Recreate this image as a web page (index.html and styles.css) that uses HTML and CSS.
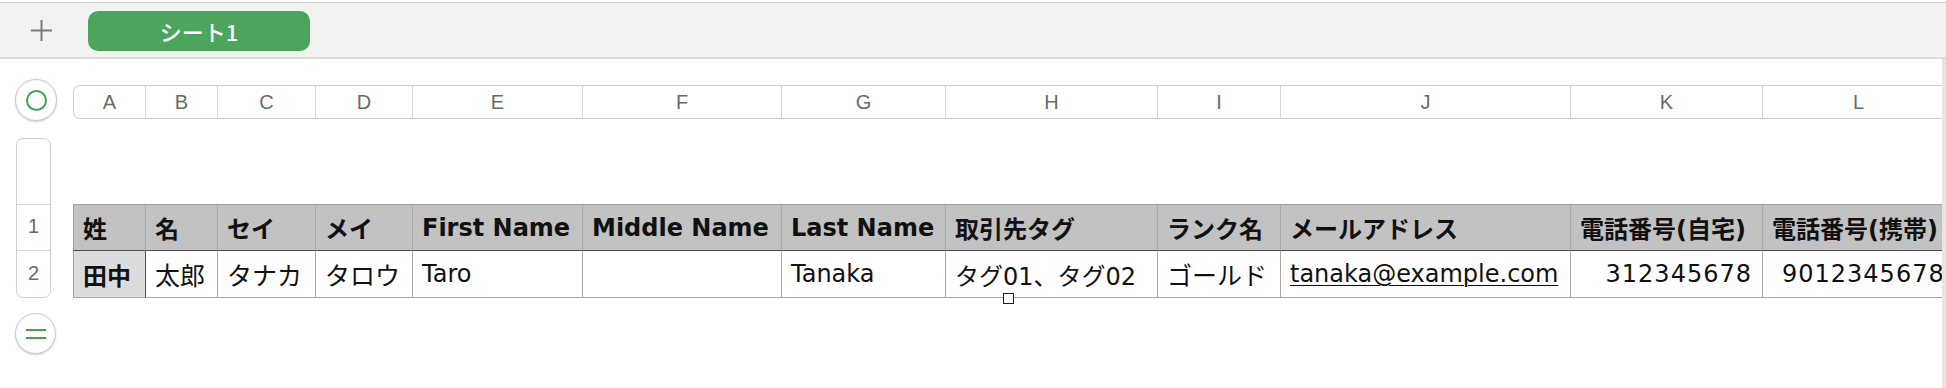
FILE: index.html
```html
<!DOCTYPE html>
<html lang="ja">
<head>
    <meta charset="UTF-8">
    <meta name="viewport" content="width=device-width, initial-scale=1.0">
    <title>シート1</title>
    <link rel="stylesheet" href="styles.css">
</head>
<body>
    <div class="tabbar">
        <button class="add-sheet" title="シートを追加">
            <svg width="21" height="21" viewBox="0 0 21 21">
                <path d="M10.5 0 V21 M0 10.5 H21" stroke="#7a7a7a" stroke-width="2" fill="none"/>
            </svg>
        </button>
        <div class="sheet-tab">シート1</div>
    </div>

    <div class="canvas">
        <div class="corner">
            <button class="circle-btn"><span class="ring"></span></button>
        </div>

        <div class="col-bar">
            <div class="col-head">A</div>
            <div class="col-head">B</div>
            <div class="col-head">C</div>
            <div class="col-head">D</div>
            <div class="col-head">E</div>
            <div class="col-head">F</div>
            <div class="col-head">G</div>
            <div class="col-head">H</div>
            <div class="col-head">I</div>
            <div class="col-head">J</div>
            <div class="col-head">K</div>
            <div class="col-head">L</div>
        </div>

        <div class="gutter">
            <div class="row-bar">
                <div class="row-head blank"></div>
                <div class="row-head">1</div>
                <div class="row-head">2</div>
            </div>
            <button class="circle-btn small"><span class="equals"></span></button>
        </div>

        <div class="table-wrap">
            <div class="table">
                <div class="cell head">姓</div>
                <div class="cell head">名</div>
                <div class="cell head">セイ</div>
                <div class="cell head">メイ</div>
                <div class="cell head">First Name</div>
                <div class="cell head">Middle Name</div>
                <div class="cell head">Last Name</div>
                <div class="cell head">取引先タグ</div>
                <div class="cell head">ランク名</div>
                <div class="cell head">メールアドレス</div>
                <div class="cell head">電話番号(自宅)</div>
                <div class="cell head">電話番号(携帯)</div>

                <div class="cell key">田中</div>
                <div class="cell ja">太郎</div>
                <div class="cell ja">タナカ</div>
                <div class="cell ja">タロウ</div>
                <div class="cell">Taro</div>
                <div class="cell"></div>
                <div class="cell">Tanaka</div>
                <div class="cell">タグ01、タグ02</div>
                <div class="cell ja">ゴールド</div>
                <div class="cell"><a class="mail" href="mailto:tanaka@example.com">tanaka@example.com</a></div>
                <div class="cell num">312345678</div>
                <div class="cell num">9012345678</div>
            </div>
            <span class="handle"></span>
        </div>
    </div>
</body>
</html>
```

FILE: styles.css
```css
body {
    margin: 0;
    background-color: white;
    font-family: "DejaVu Sans", "Noto Sans CJK JP", sans-serif;
    color: #111;
    overflow: hidden;
}
button {
    font: inherit;
    padding: 0;
    cursor: pointer;
}

/* sheet tabs */
.tabbar {
    margin-top: 2px;
    height: 53px;
    display: flex;
    align-items: center;
    gap: 36px;
    padding: 1px 0 0 31px;
    background-color: #f2f2f0;
    border-top: 1px solid #d3d3d3;
    border-bottom: 2px solid #dadada;
    box-sizing: content-box;
}
.add-sheet {
    width: 21px;
    height: 21px;
    border: none;
    background: none;
    display: flex;
}
.sheet-tab {
    width: 222px;
    height: 40px;
    border-radius: 10px;
    background-color: #4ca55c;
    color: white;
    font-family: "Noto Sans CJK JP", sans-serif;
    font-size: 22px;
    font-weight: 500;
    display: flex;
    align-items: center;
    justify-content: center;
}

/* canvas */
.canvas {
    display: grid;
    grid-template-columns: 73px 1fr;
    row-gap: 17px;
    align-items: start;
    align-content: start;
    padding-top: 20px;
    height: 310px;
    width: 1942px;
    border-right: 4px solid #e6e6e6;
    overflow: hidden;
}
.corner {
    height: 42px;
}
.circle-btn {
    width: 42px;
    height: 42px;
    margin-left: 15px;
    border-radius: 50%;
    border: 1px solid #c9c9c9;
    background-color: white;
    box-shadow: 0 1px 2px rgba(0,0,0,0.18);
    display: flex;
    align-items: center;
    justify-content: center;
    box-sizing: border-box;
}
.circle-btn.small {
    width: 41px;
    height: 41px;
    margin-top: 15px;
}
.ring {
    width: 21px;
    height: 21px;
    border: 2.5px solid #44a052;
    border-radius: 50%;
    box-sizing: border-box;
}
.equals {
    width: 20px;
    height: 10px;
    border-top: 2px solid #44a052;
    border-bottom: 2px solid #44a052;
    box-sizing: border-box;
}

/* column letters */
.col-bar {
    margin-top: 6px;
    height: 34px;
    display: grid;
    grid-template-columns: 72px 72px 98px 97px 170px 199px 164px 212px 123px 290px 192px 192px;
    width: max-content;
    border: 1px solid #cfcfcf;
    border-right: none;
    border-radius: 7px 0 0 7px;
    box-sizing: border-box;
}
.col-head, .row-head {
    display: flex;
    align-items: center;
    justify-content: center;
    font-family: "Liberation Sans", sans-serif;
    font-size: 20px;
    color: #6a6a6a;
}
.col-head {
    border-right: 1px solid #d6d6d6;
}

/* row numbers */
.gutter {
    display: flex;
    flex-direction: column;
}
.row-bar {
    margin-left: 16px;
    width: 35px;
    border: 1px solid #cfcfcf;
    border-radius: 7px;
    box-sizing: border-box;
    overflow: hidden;
}
.row-head {
    height: 46px;
    border-top: 1px solid #d6d6d6;
    padding-bottom: 2px;
    box-sizing: border-box;
}
.row-head.blank {
    height: 65px;
    border-top: none;
}
.row-head:last-child {
    height: 47px;
}

/* table */
.table-wrap {
    position: relative;
    margin-top: 66px;
}
.table {
    display: grid;
    grid-template-columns: 73px 72px 98px 97px 170px 199px 164px 212px 123px 290px 192px 192px;
    width: max-content;
}
.cell {
    height: 47px;
    padding: 0 9px;
    display: flex;
    align-items: center;
    font-size: 24px;
    white-space: nowrap;
    border-right: 1px solid #a9a9a9;
    border-bottom: 1px solid #a9a9a9;
    box-sizing: border-box;
    background-color: white;
}
.cell:nth-child(12n+1) {
    border-left: 1px solid #a3a3a3;
}
.cell.ja {
    font-size: 25px;
}
.cell.head {
    font-weight: bold;
    background-color: #c1c2c1;
    border-top: 1px solid #a3a3a3;
    border-bottom-color: #4d4d4d;
}
.cell.key {
    font-weight: bold;
    background-color: #dcdcdc;
    border-right-color: #4d4d4d;
}
.cell.num {
    justify-content: flex-end;
    padding-right: 10px;
    letter-spacing: 1px;
}
.cell:last-child {
    justify-content: flex-start;
    padding-left: 19px;
}
.mail {
    color: #111;
    text-decoration: underline;
    text-underline-offset: 3px;
    text-decoration-thickness: 1px;
}
.handle {
    position: absolute;
    left: 930px;
    top: 89px;
    width: 11px;
    height: 11px;
    background-color: white;
    border: 1px solid #222;
    box-sizing: border-box;
}
```
